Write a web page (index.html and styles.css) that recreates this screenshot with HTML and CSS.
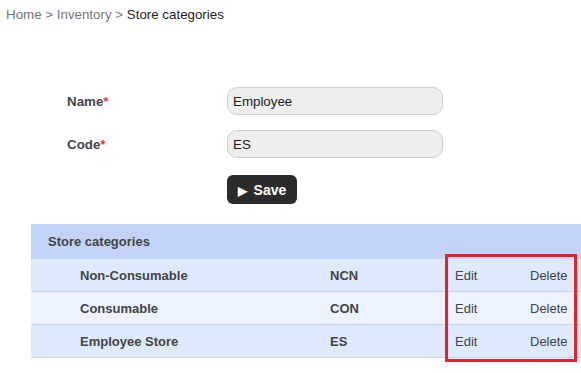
FILE: index.html
```html
<!DOCTYPE html>
<html lang="en">
<head>
  <meta charset="UTF-8">
  <title>Store categories</title>
  <link rel="stylesheet" href="styles.css">
</head>
<body>
  <div class="crumbs">
    <a href="#">Home</a> &gt; <a href="#">Inventory</a> &gt; <span class="current">Store categories</span>
  </div>

  <form class="cat-form">
    <label for="name">Name<span class="req">*</span></label>
    <input id="name" value="Employee">
    <label for="code">Code<span class="req">*</span></label>
    <input id="code" value="ES">
    <span></span>
    <button type="button" class="save"><span class="play">&#9654;</span> Save</button>
  </form>

  <div class="list-wrap">
    <table class="list">
      <colgroup>
        <col class="c-name">
        <col class="c-code">
        <col class="c-edit">
        <col class="c-del">
      </colgroup>
      <thead>
        <tr><th colspan="4">Store categories</th></tr>
      </thead>
      <tbody>
        <tr><td class="nm">Non-Consumable</td><td class="cd">NCN</td><td>Edit</td><td>Delete</td></tr>
        <tr><td class="nm">Consumable</td><td class="cd">CON</td><td>Edit</td><td>Delete</td></tr>
        <tr><td class="nm">Employee Store</td><td class="cd">ES</td><td>Edit</td><td>Delete</td></tr>
      </tbody>
    </table>
    <div class="highlight"></div>
  </div>
</body>
</html>
```

FILE: styles.css
```css
body {
  margin: 0;
  font-family: "Liberation Sans", Arial, sans-serif;
  font-size: 13.33px;
  color: #444;
  background: #fff;
}
.crumbs {
  padding: 7px 6px;
  line-height: 16px;
  color: #777;
}
.crumbs a {
  color: #777;
  text-decoration: none;
}
.crumbs .current {
  color: #222;
}
.cat-form {
  display: grid;
  grid-template-columns: 160px 216px;
  row-gap: 15px;
  align-items: center;
  margin: 57px 0 0 67px;
}
.cat-form label {
  font-weight: bold;
  color: #444;
}
.req {
  color: #e23b3b;
}
.cat-form input {
  box-sizing: border-box;
  height: 28px;
  width: 216px;
  border: 1px solid #cfcfcf;
  border-radius: 10px;
  background: #eeeeee;
  padding: 0 5px;
  font-family: inherit;
  font-size: 13.33px;
  color: #222;
}
.cat-form .save {
  justify-self: start;
  margin-top: 2px;
  width: 70px;
  height: 29px;
  border: none;
  border-radius: 6px;
  background: #2b2b2b;
  color: #fff;
  font-family: inherit;
  font-size: 14px;
  font-weight: bold;
  padding: 0;
  cursor: pointer;
}
.save .play {
  font-size: 12px;
  margin-right: 3px;
}
.list-wrap {
  position: relative;
  margin: 20px 0 0 31px;
  padding-bottom: 12px;
}
.list {
  width: 550px;
  border-collapse: collapse;
  table-layout: fixed;
  font-size: 13px;
}
.c-name { width: 299px; }
.c-code { width: 125px; }
.c-edit { width: 75px; }
.c-del { width: 51px; }
.list th {
  background: #c3d3f8;
  height: 35px;
  padding: 0 0 0 17px;
  text-align: left;
  font-weight: bold;
  color: #444;
}
.list td {
  height: 32px;
  padding: 0;
  border-bottom: 1px solid #c6d4f4;
  background: #dfe9fc;
  white-space: nowrap;
}
.list tbody tr:nth-child(2) td {
  background: #ecf2fe;
}
.list .nm {
  padding-left: 49px;
  font-weight: bold;
}
.list .cd {
  font-weight: bold;
}
.highlight {
  position: absolute;
  left: 414px;
  top: 30px;
  width: 126px;
  height: 102px;
  border: 3px solid #e5212b;
}
```
